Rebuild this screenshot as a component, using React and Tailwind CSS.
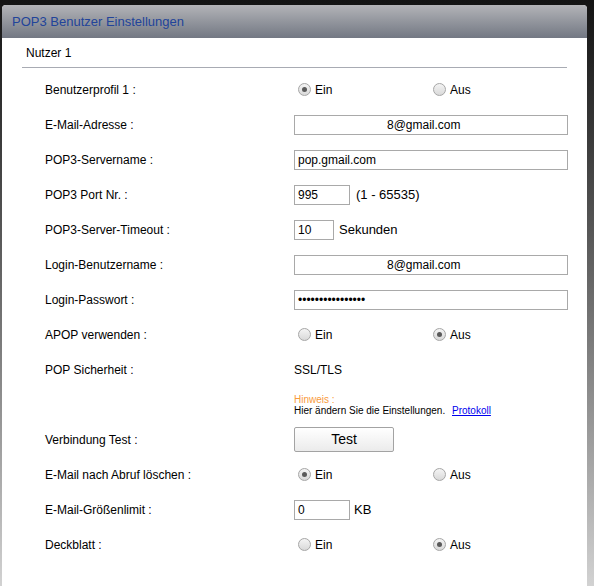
import React from "react";

const Radio = ({ checked, label }) => (
  <div className="flex items-center gap-[4px]">
    <span className="w-[13px] h-[13px] rounded-full border border-[#a6a6a6] bg-gradient-to-b from-[#f4f4f4] to-[#d9d9d9] flex items-center justify-center">
      {checked && <span className="w-[5px] h-[5px] rounded-full bg-[#5a5a5a]" />}
    </span>
    <span className="text-[12px] text-black">{label}</span>
  </div>
);

const OnOff = ({ on }) => (
  <div className="flex items-center pl-[4px]">
    <div className="w-[135px]">
      <Radio checked={on} label="Ein" />
    </div>
    <Radio checked={!on} label="Aus" />
  </div>
);

const Field = ({ w = "w-[274px]", children, pl = "pl-[3px]" }) => (
  <div className={`${w} h-[20px] border border-[#a9a9a9] bg-white flex items-center ${pl} text-[12px] text-black`}>
    {children}
  </div>
);

const Row = ({ label, children }) => (
  <div className="h-[35px] flex items-center">
    <div className="w-[249px] text-[12px] text-black">{label}</div>
    <div className="flex items-center">{children}</div>
  </div>
);

const App = () => {
  return (
    <div
      className="w-[594px] h-[586px] overflow-hidden bg-gradient-to-b from-[#141414] to-[#d2d2d2] pt-[5px] pl-[2px] pr-[7px]"
      style={{ fontFamily: '"Liberation Sans", Arial, sans-serif' }}
    >
      <div className="h-full bg-white rounded-t-[4px] flex flex-col">
        <div className="h-[33px] rounded-t-[4px] bg-gradient-to-b from-[#b3b4b8] to-[#737883] flex items-center pl-[10px]">
          <span className="text-[13px] text-[#22449a]">POP3 Benutzer Einstellungen</span>
        </div>
        <div className="px-[20px]">
          <div className="h-[30px] flex items-center pl-[4px] pt-[1px] text-[12px] text-black border-b border-[#a8abb3]">
            Nutzer 1
          </div>
        </div>
        <div className="pl-[43px] pt-[4px]">
          <Row label="Benutzerprofil 1 :">
            <OnOff on />
          </Row>
          <Row label="E-Mail-Adresse :">
            <Field pl="pl-[92px]">8@gmail.com</Field>
          </Row>
          <Row label="POP3-Servername :">
            <Field>pop.gmail.com</Field>
          </Row>
          <Row label="POP3 Port Nr. :">
            <Field w="w-[56px]">995</Field>
            <span className="ml-[6px] text-[13px] text-black">(1 - 65535)</span>
          </Row>
          <Row label="POP3-Server-Timeout :">
            <Field w="w-[40px]">10</Field>
            <span className="ml-[5px] text-[13px] text-black">Sekunden</span>
          </Row>
          <Row label="Login-Benutzername :">
            <Field pl="pl-[92px]">8@gmail.com</Field>
          </Row>
          <Row label="Login-Passwort :">
            <Field>
              <span>••••••••••••••••</span>
            </Field>
          </Row>
          <Row label="APOP verwenden :">
            <OnOff on={false} />
          </Row>
          <Row label="POP Sicherheit :">
            <span className="text-[12px] text-black">SSL/TLS</span>
          </Row>
          <div className="h-[35px] pl-[249px] pt-[7px] text-[10px] leading-[11px]">
            <div className="text-[#f99b3c]">Hinweis :</div>
            <div className="text-black">
              Hier ändern Sie die Einstellungen.{" "}
              <a className="ml-[4px] text-[#0000ee] underline">Protokoll</a>
            </div>
          </div>
          <Row label="Verbindung Test :">
            <button className="w-[100px] h-[25px] border border-[#a3a3a3] rounded-[2px] bg-gradient-to-b from-[#ffffff] to-[#ebebeb] text-[14px] text-black">
              Test
            </button>
          </Row>
          <Row label="E-Mail nach Abruf löschen :">
            <OnOff on />
          </Row>
          <Row label="E-Mail-Größenlimit :">
            <Field w="w-[56px]">0</Field>
            <span className="ml-[4px] text-[13px] text-black">KB</span>
          </Row>
          <Row label="Deckblatt :">
            <OnOff on={false} />
          </Row>
        </div>
      </div>
    </div>
  );
};

export default App;
